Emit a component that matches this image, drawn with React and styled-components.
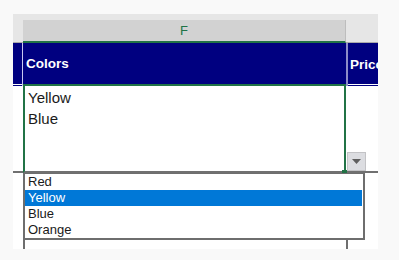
import styled, { createGlobalStyle } from "styled-components";

const GlobalStyle = createGlobalStyle`
  body {
    margin: 0;
    background: #f9f9f9;
    font-family: "Liberation Sans", Arial, sans-serif;
  }
`;

const Styled = {
  Sheet: styled.div`
    position: relative;
    margin: 14px 0 0 13px;
    width: 365px;
    height: 235px;
    background: #e6e6e6;
    display: grid;
    grid-template-columns: 10px 323px 1fr;
    grid-template-rows: 29px 43px 87px 1fr;
    overflow: hidden;
  `,
  Corner: styled.div`
    border-bottom: 1px solid #ababab;
  `,
  ColHead: styled.div`
    margin-top: 6px;
    background: ${({ $active }) => ($active ? "#d2d2d2" : "#e6e6e6")};
    color: #217346;
    font-size: 13px;
    display: flex;
    align-items: center;
    justify-content: center;
    border-right: ${({ $active }) => ($active ? "1px solid #bdbdbd" : "none")};
    border-bottom: ${({ $active }) => ($active ? "2px solid #217346" : "1px solid #ababab")};
  `,
  Header: styled.div`
    background: #000080;
    color: #ffffff;
    font-weight: bold;
    font-size: 13.5px;
    display: flex;
    align-items: center;
    padding-left: ${({ $pad }) => $pad || 0}px;
    white-space: nowrap;
    overflow: hidden;
    border-left: ${({ $edge }) => ($edge ? "2px solid #8c8cc8" : "none")};
    border-right: ${({ $lead }) => ($lead ? "1px solid #c8c8f0" : "none")};
    box-shadow: ${({ $sel }) =>
      $sel ? "none" : "inset 0 -1px 0 #000080, inset 0 -2px 0 #ffffff"};
    border-bottom: ${({ $sel }) => ($sel ? "2px solid #217346" : "0")};
  `,
  Cell: styled.div`
    background: #ffffff;
    border-bottom: 2px solid #707070;
  `,
  Active: styled.div`
    position: relative;
    background: #ffffff;
    border-left: 2px solid #217346;
    border-right: 2px solid #217346;
    border-bottom: 2px solid #707070;
    padding: 1px 0 0 3px;
    font-size: 15px;
    line-height: 21px;
    color: #1a1a1a;
  `,
  Handle: styled.span`
    position: absolute;
    right: -3px;
    bottom: -3px;
    width: 5px;
    height: 4px;
    background: #217346;
  `,
  DropButton: styled.div`
    position: absolute;
    left: 334px;
    top: 138px;
    width: 17px;
    height: 17px;
    background: #dcdde1;
    border: 1px solid #c3c3c6;
    display: flex;
    align-items: center;
    justify-content: center;
  `,
  Below: styled.div`
    background: #ffffff;
    border-left: ${({ $line }) => ($line ? "2px solid #6e6e6e" : "none")};
  `,
  List: styled.ul`
    position: absolute;
    left: 10px;
    top: 159px;
    width: 338px;
    margin: 0;
    padding: 0;
    list-style: none;
    background: #ffffff;
    border: 2px solid #6e6e6e;
    border-top: 1px solid #6e6e6e;
  `,
  Item: styled.li`
    height: 16px;
    line-height: 16px;
    font-size: 13px;
    padding-left: 3px;
    margin-right: 1px;
    color: ${({ $selected }) => ($selected ? "#ffffff" : "#1a1a1a")};
    background: ${({ $selected }) => ($selected ? "#0078d7" : "transparent")};
  `,
};

const options = ["Red", "Yellow", "Blue", "Orange"];

function App() {
  return (
    <>
      <GlobalStyle />
      <Styled.Sheet>
        <Styled.Corner />
        <Styled.ColHead $active>F</Styled.ColHead>
        <Styled.ColHead />

        <Styled.Header $lead />
        <Styled.Header $pad={3} $sel>
          Colors
        </Styled.Header>
        <Styled.Header $edge $pad={2}>
          Price
        </Styled.Header>

        <Styled.Cell />
        <Styled.Active>
          Yellow
          <br />
          Blue
          <Styled.Handle />
        </Styled.Active>
        <Styled.Cell />

        <Styled.Below />
        <Styled.Below $line />
        <Styled.Below $line />

        <Styled.DropButton>
          <svg width="9" height="5" viewBox="0 0 9 5">
            <path d="M0 0 H9 L4.5 5 Z" fill="#5f5f5f" />
          </svg>
        </Styled.DropButton>

        <Styled.List>
          {options.map((o) => (
            <Styled.Item key={o} $selected={o === "Yellow"}>
              {o}
            </Styled.Item>
          ))}
        </Styled.List>
      </Styled.Sheet>
    </>
  );
}

export default App;
